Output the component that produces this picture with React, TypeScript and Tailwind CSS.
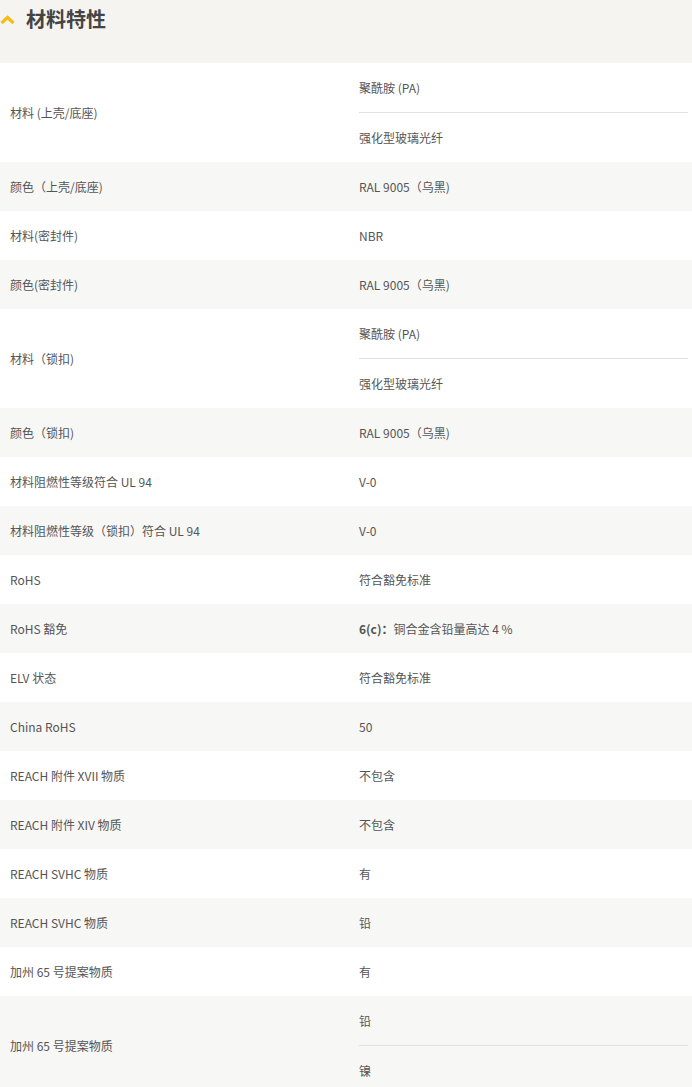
const rows: { label: string; values: string[] }[] = [
  { label: "材料 (上壳/底座)", values: ["聚酰胺 (PA)", "强化型玻璃光纤"] },
  { label: "颜色（上壳/底座)", values: ["RAL 9005（乌黑)"] },
  { label: "材料(密封件)", values: ["NBR"] },
  { label: "颜色(密封件)", values: ["RAL 9005（乌黑)"] },
  { label: "材料（锁扣)", values: ["聚酰胺 (PA)", "强化型玻璃光纤"] },
  { label: "颜色（锁扣)", values: ["RAL 9005（乌黑)"] },
  { label: "材料阻燃性等级符合 UL 94", values: ["V-0"] },
  { label: "材料阻燃性等级（锁扣）符合 UL 94", values: ["V-0"] },
  { label: "RoHS", values: ["符合豁免标准"] },
  { label: "RoHS 豁免", values: ["铜合金含铅量高达 4 %"] },
  { label: "ELV 状态", values: ["符合豁免标准"] },
  { label: "China RoHS", values: ["50"] },
  { label: "REACH 附件 XVII 物质", values: ["不包含"] },
  { label: "REACH 附件 XIV 物质", values: ["不包含"] },
  { label: "REACH SVHC 物质", values: ["有"] },
  { label: "REACH SVHC 物质", values: ["铅"] },
  { label: "加州 65 号提案物质", values: ["有"] },
  { label: "加州 65 号提案物质", values: ["铅", "镍"] },
];

export default function App() {
  return (
    <div
      className="w-[692px] h-[1087px] overflow-hidden bg-white text-[12px] text-[#555]"
      style={{ fontFamily: '"Noto Sans CJK SC", "Noto Sans", sans-serif' }}
    >
      <header className="h-[63px] bg-[#f5f4f0] flex items-start pt-[4px]">
        <svg width="16" height="12" viewBox="0 0 16 12" className="mt-[10px]">
          <path d="M1.5 9 L7.5 3.5 L13.5 9" fill="none" stroke="#f6bc1a" strokeWidth="3.2" />
        </svg>
        <h2 className="ml-[10px] text-[20px] font-bold text-[#444] leading-[30px]">材料特性</h2>
      </header>
      <div>
        {rows.map((row, i) => (
          <div key={i} className={`flex ${i % 2 === 1 ? "bg-[#f7f7f5]" : "bg-white"}`}>
            <div className="w-[349px] pl-[10px] flex items-center">{row.label}</div>
            <div className="flex-1 pl-[10px] pr-[4px]">
              {row.values.map((v, j) => (
                <div
                  key={j}
                  className={`flex items-center ${j > 0 ? "border-t border-[#e2e2e2] h-[50px]" : "h-[49px]"}`}
                >
                  {row.label === "RoHS 豁免" && <span className="font-bold">6(c)：</span>}
                  {v}
                </div>
              ))}
            </div>
          </div>
        ))}
      </div>
    </div>
  );
}
